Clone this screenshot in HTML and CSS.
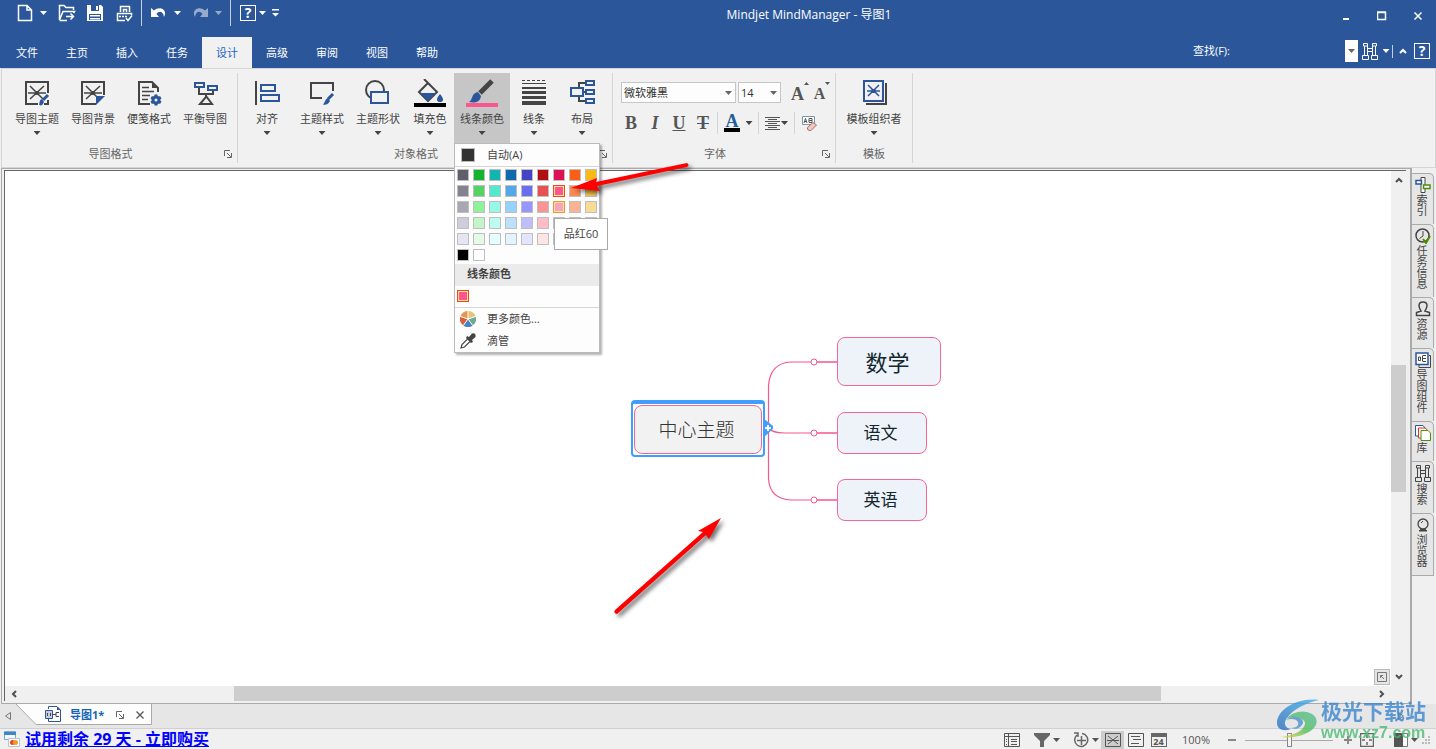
FILE: index.html
```html
<!DOCTYPE html>
<html lang="zh-CN">
<head>
<meta charset="utf-8">
<title>Mindjet MindManager - 导图1</title>
<link rel="stylesheet" href="styles.css">
</head>
<body>
<header class="header">
  <div class="titlebar">
    <div class="quick">
      <button class="qa" aria-label="新建"><svg width="16" height="18" viewBox="0 0 16 18"><path d="M1.500 1.500H10L14.500 6V16.500H1.500ZM10 1.500V6H14.500" class="ln"/></svg></button>
      <button class="qa-arrow" aria-label="新建选项"><i class="caret"></i></button>
      <button class="qa gap-l" aria-label="打开"><svg width="18" height="18" viewBox="0 0 18 18"><path d="M1.500 16V1.500H6L8 3.500H15.500V6M1.500 16L5 7.500H16.500L15.500 9M1.500 16.500H9M8 12.500H15M12.500 9.500L15.500 12.500L12.500 15.500" class="ln"/></svg></button>
      <button class="qa gap-s" aria-label="保存"><svg width="16" height="16" viewBox="0 0 16 16"><path d="M0 0H14L16 2V16H0ZM4 0V6H12V0ZM2 9V15H14V9Z" fill-rule="evenodd" fill="#fff"/><path d="M9 1H11V5H9ZM3 10H13V11.500H3ZM3 13H13V14.500H3Z" fill="#fff"/></svg></button>
      <button class="qa gap-l" aria-label="快速打印"><svg width="17" height="17" viewBox="0 0 17 17"><path d="M4.500 7V1.500H13.500V7M7.500 7V4.500H10.500V7M9 15.500H1.500V8.500H15.500V10M3 11.500H5M6 11.500H8M9 11.500H11M10 13L12 15.500L16 10.500" class="ln"/></svg></button>
      <span class="qa-sep"></span>
      <button class="qa" aria-label="撤消"><svg width="16" height="14" viewBox="0 0 16 14"><path d="M0 2V11H8L5.500 8C8 4.500 12 5 13 11C17 4 9 -1 3 4.500Z" fill="#fff"/></svg></button>
      <button class="qa-arrow" aria-label="撤消列表"><i class="caret"></i></button>
      <button class="qa gap-s dim" aria-label="恢复"><svg width="16" height="14" viewBox="0 0 16 14"><path d="M16 2V11H8L10.500 8C8 4.500 4 5 3 11C-1 4 7 -1 13 4.500Z" fill="#fff"/></svg></button>
      <button class="qa-arrow dim" aria-label="恢复列表"><i class="caret"></i></button>
      <span class="qa-sep"></span>
      <button class="help-btn gap-s" aria-label="帮助">?</button>
      <button class="qa-arrow" aria-label="帮助选项"><i class="caret"></i></button>
      <button class="qa-arrow" aria-label="自定义"><svg width="7" height="8" viewBox="0 0 7 8"><path d="M0 0H7V1.500H0ZM0 4H7L3.500 7.500Z" fill="#fff"/></svg></button>
    </div>
    <h1 class="title">Mindjet MindManager - 导图1</h1>
    <div class="win">
      <button aria-label="最小化"><svg width="10" height="10"><path d="M2 7H8V9H2Z" fill="#fff"/></svg></button>
      <button aria-label="最大化"><svg width="10" height="10"><path d="M.5 1.500H8.500V8.500H.5ZM0 1H9" class="ln"/></svg></button>
      <button aria-label="关闭"><svg width="10" height="10"><path d="M1.500 1.500L8.500 8.500M8.500 1.500L1.500 8.500" class="ln"/></svg></button>
    </div>
  </div>
  <div class="menubar">
    <nav class="tabs">
      <button>文件</button><button>主页</button><button>插入</button><button>任务</button><button class="active">设计</button><button>高级</button><button>审阅</button><button>视图</button><button>帮助</button>
    </nav>
    <div class="find">
      <label for="find">查找(F):</label>
      <input id="find" type="text">
      <button class="find-drop" aria-label="查找历史"><i class="caret"></i></button>
      <button class="find-go" aria-label="查找"><svg width="16" height="17" viewBox="0 0 16 17"><path d="M1.500 .5H5.500V3H1.500ZM10.500 .5H14.500V3H10.500ZM2.500 3V12M5.500 3V12M10.500 3V12M13.500 3V12M5.500 5.500H10.500V8.500H5.500M.5 12.500H6.500V16.500H.5ZM9.500 12.500H15.500V16.500H9.500Z" fill="none" stroke="#fff"/></svg></button>
      <button class="find-arrow" aria-label="查找选项"><i class="caret"></i></button>
      <span class="find-sep"></span>
      <button class="collapse" aria-label="折叠功能区"><svg width="8" height="6"><path d="M1 5L4 2L7 5" class="ln heavy"/></svg></button>
      <button class="help-btn" aria-label="帮助主题">?</button>
    </div>
  </div>
</header>

<section class="ribbon">
  <div class="group g-map">
    <div class="items">
      <button class="item"><svg width="28" height="28" viewBox="0 0 28 28"><path d="M15 25H3V3H25V14M21 25H25V21" class="dk"/><path d="M7 7L20 20M21 7L7 20M5 14H23" class="dk thin"/><path d="M12 12H16V16H12Z" fill="#444"/><path d="M25 16L20 21" stroke="#2b579a" stroke-width="3"/><path d="M19 20L21 23C19 27 18 27 16 25.500C17 24 16 21 19 20Z" fill="#2b579a"/></svg><span>导图主题</span><i class="caret"></i></button>
      <button class="item"><svg width="28" height="28" viewBox="0 0 28 28"><path d="M17 25H3V3H25V16" class="dk"/><path d="M7 7L20 20M21 7L7 20M5 14H23" class="dk thin"/><path d="M12 12H16V16H12Z" fill="#444"/><path d="M17 17H26L17 26Z" fill="#2b579a"/></svg><span>导图背景</span></button>
      <button class="item"><svg width="28" height="28" viewBox="0 0 28 28"><path d="M15 25H4V3H17L23 9V13" class="dk"/><path d="M17 3V9H23Z" fill="#444"/><path d="M7 8.500H14M7 12.500H19M7 16.500H15M7 20.500H13" class="dk thin"/><circle cx="21" cy="21" r="3" fill="none" stroke="#2b579a" stroke-width="3"/><path d="M21 15.500V18M21 24V26.500M16.200 18.200L18.400 19.500M23.600 22.500L25.800 23.800M25.800 18.200L23.600 19.500M16.200 23.800L18.400 22.500" stroke="#2b579a" stroke-width="3"/></svg><span>便笺格式</span></button>
      <button class="item"><svg width="28" height="28" viewBox="0 0 28 28"><path d="M8 8V15H22V11M15 15V18L9 25H21L15 17" class="dk"/><path d="M4 4H13V8H4ZM17 7H26V11H17Z" class="bl" fill="#f1f1f1"/></svg><span>平衡导图</span></button>
    </div>
    <div class="foot"><span>导图格式</span><button class="launch" aria-label="导图格式设置"><svg width="8" height="8"><path d="M.5 6V.5H6M3 3L7 7M7.500 3V7.500H3" fill="none" stroke="#666"/></svg></button></div>
  </div>
  <div class="group g-object">
    <div class="items">
      <button class="item first"><svg width="28" height="28" viewBox="0 0 28 28"><path d="M3 2V26" class="dk"/><path d="M8 6H22V12H8ZM8 16H26V22H8Z" class="bl"/></svg><span>对齐</span><i class="caret"></i></button>
      <button class="item"><svg width="28" height="28" viewBox="0 0 28 28"><path d="M14 19H3V4H25V12" class="dk"/><path d="M25 15L20 20" stroke="#2b579a" stroke-width="3"/><path d="M20 19L22 22C20 26 17 26 15 25.500C17 24 17 20 20 19Z" fill="#2b579a"/></svg><span>主题样式</span><i class="caret"></i></button>
      <button class="item"><svg width="28" height="28" viewBox="0 0 28 28"><circle cx="11" cy="11" r="9" class="dk"/><path d="M7 13H24V24H7Z" class="bl" fill="#f1f1f1"/></svg><span>主题形状</span><i class="caret"></i></button>
      <button class="item short"><svg width="32" height="28" viewBox="0 0 32 28"><path d="M5 13L14 4L23 13L14 22ZM10 0L16 6" class="dk"/><path d="M6 14H22L14 22Z" fill="#2b579a"/><path d="M26 15C21 21 23 23 26 23S31 21 26 15Z" fill="#2b579a"/><path d="M0 24H32V28H0Z" fill="#000"/></svg><span>填充色</span><i class="caret"></i></button>
      <div class="drop-host">
        <button class="item pressed" aria-expanded="true"><svg width="32" height="28" viewBox="0 0 32 28"><path d="M26 2L14 14" stroke="#444" stroke-width="5"/><path d="M12 13L15 17C14 24 8 24 3 23C7 21 5 14 12 13Z" fill="#2b579a"/><path d="M0 24H32V28H0Z" fill="#fc5590"/></svg><span>线条颜色</span><i class="caret"></i></button>
        <div class="palette">
          <button class="auto"><i></i><span>自动(A)</span></button>
          <div class="swatches">
            <button style="--c:#5f5f6b"></button><button style="--c:#12b32d"></button><button style="--c:#13b5b1"></button><button style="--c:#1069aa"></button><button style="--c:#4545c4"></button><button style="--c:#b01010"></button><button style="--c:#de1153"></button><button style="--c:#fa5f17"></button><button style="--c:#fbb917"></button>
            <button style="--c:#83838f"></button><button style="--c:#54d362"></button><button style="--c:#54e8cf"></button><button style="--c:#53a9e7"></button><button style="--c:#6a6ded"></button><button style="--c:#e65151"></button><button class="picked" style="--c:#fc558f"></button><button style="--c:#fa8a55"></button><button style="--c:#f9c452"></button>
            <button style="--c:#a8a8b4"></button><button style="--c:#90f298"></button><button style="--c:#98f8e8"></button><button style="--c:#95d3fa"></button><button style="--c:#9696fc"></button><button style="--c:#f89494"></button><button class="hovered" style="--c:#f9a1c1"></button><button style="--c:#f8b394"></button><button style="--c:#f8db94"></button>
            <button style="--c:#cfcddb"></button><button style="--c:#c4f5c8"></button><button style="--c:#bdfbf0"></button><button style="--c:#bbe1fb"></button><button style="--c:#bebefb"></button><button style="--c:#fcbdc6"></button><button style="--c:#fcc9dc"></button><button style="--c:#fbd3c0"></button><button style="--c:#fbebc0"></button>
            <button style="--c:#e6e5f2"></button><button style="--c:#e3fbe5"></button><button style="--c:#e3ffff"></button><button style="--c:#e3f3ff"></button><button style="--c:#e4e4ff"></button><button style="--c:#ffe4e4"></button><button style="--c:#ffe8f0"></button><button style="--c:#ffeee6"></button><button style="--c:#fff8e6"></button>
            <button style="--c:#000"></button><button style="--c:#fff"></button>
          </div>
          <div class="band">线条颜色</div>
          <div class="swatches current"><button class="picked" style="--c:#fc558f"></button></div>
          <button class="more top-line"><svg width="16" height="16" viewBox="0 0 16 16"><path d="M8 8V0A8 8 0 0 1 15.600 5.500Z" fill="#e9c178"/><path d="M8 8L15.600 5.500A8 8 0 0 1 12.700 14.500Z" fill="#70a896"/><path d="M8 8L12.700 14.500A8 8 0 0 1 3.300 14.500Z" fill="#4a82bd"/><path d="M8 8L3.300 14.500A8 8 0 0 1 .4 5.500Z" fill="#d9603f"/><path d="M8 8L.4 5.500A8 8 0 0 1 8 0Z" fill="#e39a50"/><path d="M8 8V0M8 8L15.600 5.500M8 8L12.700 14.500M8 8L3.300 14.500M8 8L.4 5.500" stroke="#fdfdfd"/></svg><span>更多颜色...</span></button>
          <button class="more"><svg width="16" height="16" viewBox="0 0 16 16"><path d="M1 15L2 11.500L8 5.500L10.500 8L4.500 14Z" fill="#fff" stroke="#444" stroke-width="1.200"/><path d="M7 3L9 4L12 .5Q16 -1 15.500 4L12 7L13 9L11 10L6 5Z" fill="#444"/></svg><span>滴管</span></button>
          <div class="tip" role="tooltip">品红60</div>
        </div>
      </div>
      <button class="item short"><svg width="24" height="28" viewBox="0 0 24 28"><path d="M0 1.500H24" stroke="#444" stroke-dasharray="3 2"/><path d="M0 4H24V5H0ZM0 8H24V10H0ZM0 12H24V15H0ZM0 17H24V20H0ZM0 22H24V26H0Z" fill="#444"/></svg><span>线条</span><i class="caret"></i></button>
      <button class="item short"><svg width="26" height="28" viewBox="0 0 26 28"><path d="M14 13H18M18 4H10V22H18" class="dk" /><path d="M2 9H14V17H2Z" class="bl" fill="#f1f1f1"/><path d="M17 2H25V6H17ZM17 11H25V15H17ZM17 20H25V24H17Z" class="bl" fill="#f1f1f1"/></svg><span>布局</span><i class="caret"></i></button>
    </div>
    <div class="foot"><span>对象格式</span><button class="launch" aria-label="对象格式设置"><svg width="8" height="8"><path d="M.5 6V.5H6M3 3L7 7M7.500 3V7.500H3" fill="none" stroke="#666"/></svg></button></div>
  </div>
  <div class="group g-font">
    <div class="font-body">
      <div class="font-row">
        <span class="combo family"><select aria-label="字体"><option>微软雅黑</option></select><i class="caret"></i></span>
        <span class="combo size"><select aria-label="字号"><option>14</option></select><i class="caret"></i></span>
        <button class="fbtn grow" aria-label="增大字号">A<svg width="5" height="3"><path d="M0 3L2.500 0L5 3Z" fill="#555"/></svg></button>
        <button class="fbtn shrink" aria-label="缩小字号">A<svg width="5" height="3"><path d="M0 0L2.500 3L5 0Z" fill="#555"/></svg></button>
      </div>
      <div class="font-row second">
        <button class="fbtn" aria-label="加粗">B</button>
        <button class="fbtn italic" aria-label="倾斜">I</button>
        <button class="fbtn under" aria-label="下划线">U</button>
        <button class="fbtn strike" aria-label="删除线">T</button>
        <span class="fsep"></span>
        <button class="fbtn color" aria-label="字体颜色">A</button>
        <button class="farrow" aria-label="字体颜色选项"><i class="caret"></i></button>
        <span class="fsep"></span>
        <button class="farrow align" aria-label="对齐方式"><svg width="15" height="15"><path d="M0 1.500H15M3 3.500H12M0 5.500H15M3 7.500H12M0 9.500H15M3 11.500H12M0 13.500H15" stroke="#555"/></svg><i class="caret"></i></button>
        <span class="fsep"></span>
        <button class="fbtn" aria-label="清除格式"><svg width="17" height="17" viewBox="0 0 17 17"><path d="M1.500 1.500H13.500V9.500H1.500Z" fill="#fff" stroke="#7b98a8"/><path d="M3 8L4.500 3.500L6 8M3.500 6.500H5.500M8 3.500V7.500H11V3.500H8M8 5.500H11" fill="none" stroke="#555"/><path d="M6.500 12.500L12 7.500L15.500 10L10 15.500Q6 16 6.500 12.500Z" fill="#f0c8c4" stroke="#a86c68"/></svg></button>
      </div>
    </div>
    <div class="foot"><span>字体</span><button class="launch" aria-label="字体设置"><svg width="8" height="8"><path d="M.5 6V.5H6M3 3L7 7M7.500 3V7.500H3" fill="none" stroke="#666"/></svg></button></div>
  </div>
  <div class="group g-template">
    <div class="items">
      <button class="item"><svg width="28" height="28" viewBox="0 0 28 28"><path d="M6 25H26V4" class="dk"/><path d="M4 2H23V22H4Z" class="bl"/><path d="M8 6L19 17M19 6L8 17M7 12H20" stroke="#2b579a" stroke-width="1.500"/><path d="M11.500 10H15.500V14H11.500Z" fill="#2b579a"/></svg><span>模板组织者</span><i class="caret"></i></button>
    </div>
    <div class="foot"><span>模板</span></div>
  </div>
</section>

<main class="work">
  <div class="frame">
    <div class="view">
      <div class="canvas">
        <svg class="links" width="340" height="200" viewBox="0 0 340 200">
          <path d="M137.500 96V50Q139 27 160 26H206M137.500 96V143Q139 163 160 164H206M137 92Q142 97 153 97H206" fill="none" stroke="#f4568e" stroke-width="1.200"/>
          <g fill="#fff" stroke="#f4568e"><path d="M180 26H206M180 97H206M180 164H206" stroke-width="1.200"/><circle cx="183" cy="26" r="3"/><circle cx="183" cy="97" r="3"/><circle cx="183" cy="164" r="3"/></g>
        </svg>
        <div class="selected"><div class="node root">中心主题</div></div>
        <button class="add" aria-label="添加主题"><svg width="11" height="22" viewBox="0 0 11 22"><path d="M0 1L10 9V12L0 21Z" fill="#409eff"/><path d="M2 11H8M5 8V14" stroke="#fff" stroke-width="2"/></svg></button>
        <div class="node math">数学</div>
        <div class="node chinese">语文</div>
        <div class="node english">英语</div>
        <button class="corner" aria-label="导图概览"><svg width="14" height="14"><path d="M2.500 2.500H11.500V11.500H2.500ZM5.500 8V5.500H8M6 6L9 9" fill="none" stroke="#777"/></svg></button>
      </div>
      <div class="vbar"><button aria-label="向上"><svg width="8" height="8"><path d="M1 6L4 3L7 6" class="chev"/></svg></button><i class="rest"></i><i class="thumb"></i><i class="rest"></i><button aria-label="向下"><svg width="8" height="8"><path d="M1 2L4 5L7 2" class="chev"/></svg></button></div>
    </div>
    <div class="hbar"><button aria-label="向左"><svg width="8" height="8"><path d="M6 1L3 4L6 7" class="chev"/></svg></button><i class="rest"></i><i class="thumb"></i><i class="rest"></i><button aria-label="向右"><svg width="8" height="8"><path d="M2 1L5 4L2 7" class="chev"/></svg></button></div>
  </div>
  <aside class="side">
    <button><svg width="16" height="16" viewBox="0 0 16 16"><path d="M6 .5H10V15.500H6Z" fill="#fff" stroke="#444"/><path d="M1 3.500H6.500V7H1Z" fill="#fff" stroke="#2b579a" stroke-width="1.500"/><path d="M8.500 8H15V11.500H8.500Z" fill="#fff" stroke="#4e8f00" stroke-width="1.500"/></svg><span>索引</span></button>
    <button><svg width="16" height="16" viewBox="0 0 16 16"><circle cx="7.500" cy="7.500" r="6.500" fill="none" stroke="#444" stroke-width="1.500"/><path d="M8 3V8L4.500 10.500" fill="none" stroke="#444"/><path d="M8 11L11 15L15 8" fill="none" stroke="#4e8f00" stroke-width="2"/></svg><span>任务信息</span></button>
    <button><svg width="16" height="16" viewBox="0 0 16 16"><path d="M6 10Q4 7 4 4.500Q4 1 8 1T12 4.500Q12 7 10 10L14.500 11.500V14.500H1.500V11.500Z" fill="none" stroke="#444" stroke-width="1.500"/></svg><span>资源</span></button>
    <button><svg width="16" height="16" viewBox="0 0 16 16"><path d="M14 3.500H15.500V15.500H4V13" fill="none" stroke="#444"/><path d="M1 1H13V12.500H1Z" fill="#fff" stroke="#2b579a" stroke-width="1.500"/><path d="M3.500 5H5.500V8.500H3.500ZM8 3.500H11M8 6.500H11M8 9.500H11M7.500 3.500V9.500" fill="none" stroke="#444"/></svg><span>导图组件</span></button>
    <button><svg width="16" height="16" viewBox="0 0 16 16"><path d="M.5 11V.5H8L10 3V11Z" fill="#fff" stroke="#2b579a"/><path d="M3.500 13V3H10L12.500 5V13Z" fill="#fff" stroke="#e03020"/><path d="M6 15.500V5.500H13L15.500 8V15.500Z" fill="#fff" stroke="#4e8f00"/></svg><span>库</span></button>
    <button><svg width="16" height="17" viewBox="0 0 16 17"><path d="M1.500 .5H5.500V3H1.500ZM10.500 .5H14.500V3H10.500ZM2.500 3V12M5.500 3V12M10.500 3V12M13.500 3V12M5.500 5.500H10.500V8.500H5.500M.5 12.500H6.500V16.500H.5ZM9.500 12.500H15.500V16.500H9.500Z" fill="none" stroke="#444"/></svg><span>搜索</span></button>
    <button><svg width="16" height="16" viewBox="0 0 16 16"><circle cx="8" cy="7" r="5" fill="none" stroke="#444" stroke-width="1.300"/><path d="M6 6L8 4M4 14H12L10.500 12.500H5.500Z" fill="#444" stroke="#444"/></svg><span>浏览器</span></button>
  </aside>
</main>

<div class="docs">
  <button class="nav" aria-label="上一个"><svg width="6" height="8"><path d="M5.500 .5V7.500L.5 4Z" fill="none" stroke="#777"/></svg></button>
  <div class="doc">
    <svg class="doc-shape" width="136" height="21" viewBox="0 0 136 21"><path d="M0 0L20 20.500H135.500V0" fill="#fdfdfd" stroke="#aaa"/></svg>
    <svg class="doc-icon" width="17" height="17" viewBox="0 0 17 17"><path d="M3.500 3V.5H12L15.500 4V15.500H3.500V13" fill="#fff" stroke="#2b579a"/><path d="M12 .5V4H15.500Z" fill="#2b579a"/><path d="M.5 4.500H7.500V12.500H.5Z" fill="#ccd" stroke="#2b579a"/><path d="M2.500 7V10M5.500 7V10M8 8.500H11M14 6.500H11V10.500H14" fill="none" stroke="#444"/></svg>
    <span>导图1*</span>
    <button aria-label="浮动"><svg width="8" height="8"><path d="M.5 6V.5H6M3 3L7 7M7.500 3V7.500H3" fill="none" stroke="#666"/></svg></button>
    <button aria-label="关闭导图"><svg width="8" height="8"><path d="M.5 .5L7.500 7.500M7.500 .5L.5 7.500" stroke="#555" stroke-width="1.300"/></svg></button>
  </div>
  <button class="nav next" aria-label="下一个"><svg width="6" height="8"><path d="M.5 .5V7.500L5.500 4Z" fill="none" stroke="#777"/></svg></button>
</div>

<footer class="status">
  <svg width="16" height="16" viewBox="0 0 16 16"><path d="M.5 .5H11.500V8.500H.5Z" fill="#f4f8fb" stroke="#80a8c8"/><path d="M0 1H12V4H0Z" fill="#3d87c2"/><path d="M4.500 7.500H15.500V15.500H4.500Z" fill="#fff" stroke="#b9c4cc"/><circle cx="8.500" cy="11.500" r="2.500" fill="#e04a20"/><circle cx="11.500" cy="11.500" r="2.500" fill="#f29a30"/></svg>
  <a href="#buy">试用剩余 29 天 - 立即购买</a>
  <div class="tools">
    <button class="t" aria-label="大纲"><svg width="16" height="14"><path d="M.5 .5H15.500V13.500H.5ZM0 3.500H15M4.500 1V13M2 6.500H3M7 6.500H13M2 8.500H3M7 8.500H13M2 11.500H3M7 11.500H13" fill="none" stroke="#555"/></svg></button>
    <button class="t duo" aria-label="筛选"><svg width="16" height="14"><path d="M0 0H16V2L10 8V14H6V8L0 2Z" fill="#666"/></svg><i class="caret"></i></button>
    <button class="t duo" aria-label="展开"><svg width="16" height="16"><path d="M4 3A6.500 6.500 0 1 0 9 1.500M4 8.500H13M8.500 4V13M1 1H5V5" fill="none" stroke="#666" stroke-width="1.500"/></svg><i class="caret"></i></button>
    <button class="t on" aria-label="导图视图"><svg width="16" height="14"><path d="M.5 .5H15.500V13.500H.5ZM3 3L13 11M13 3L3 11M2 7.500H14" fill="none" stroke="#555"/></svg></button>
    <button class="t" aria-label="大纲视图"><svg width="16" height="14"><path d="M.5 .5H15.500V13.500H.5ZM3 3.500H12M5 6.500H13M3 10.500H11" fill="none" stroke="#555"/></svg></button>
    <button class="t cal" aria-label="日程视图"><b>24</b></button>
    <span class="pct">100%</span>
    <button class="t sm minus" aria-label="缩小"><svg width="8" height="8"><path d="M0 4H8" stroke="#888" stroke-width="2"/></svg></button>
    <input class="zoom" type="range" aria-label="缩放" min="0" max="100" value="50">
    <button class="t sm" aria-label="放大"><svg width="8" height="8"><path d="M0 4H8M4 0V8" stroke="#888" stroke-width="2"/></svg></button>
    <button class="t fit" aria-label="适合窗口"><svg width="14" height="14"><path d="M.5 .5H13.500V13.500H.5ZM7 2V5M7 9V12M2 7H5M9 7H12" fill="none" stroke="#666" stroke-width="1.500"/></svg></button>
    <button class="t duo" aria-label="任务窗格"><svg width="14" height="14"><path d="M.5 .5H13.500V13.500H.5Z" fill="#fff" stroke="#777"/><path d="M0 0H9V14H0Z" fill="#555"/></svg><i class="caret"></i></button>
    <svg class="grip" width="9" height="9"><path d="M6 0H8V2H6ZM3 3H5V5H3ZM6 3H8V5H6ZM0 6H2V8H0ZM3 6H5V8H3ZM6 6H8V8H6Z" fill="#bbb"/></svg>
  </div>
</footer>

<svg class="arrows" width="720" height="640" viewBox="0 0 720 640" aria-hidden="true">
  <g fill="red" stroke="none"><path d="M571 188L597 178L596 182L687 163Q690 165 687 167L597 186L600 191Z"/><path d="M721 518L709 539L706 535L617 614Q613 613 615 610L703 532L698 531Z"/></g>
</svg>

<div class="mark">
  <svg width="42" height="40" viewBox="0 0 42 40"><defs><linearGradient id="a" x1="0" y1="1" x2="1" y2="0"><stop offset="0" stop-color="#2f6fc4"/><stop offset="1" stop-color="#45b5e8"/></linearGradient><linearGradient id="b" x1="0" y1="1" x2="1" y2="0"><stop offset="0" stop-color="#f0d545"/><stop offset=".5" stop-color="#52bd5e"/><stop offset="1" stop-color="#58be9b"/></linearGradient></defs><path d="M42 1C20-2 0 11 0 24C0 30 6 33 14 30C8 29 6 24 10 19C16 10 29 4 42 1Z" fill="url(#a)"/><path d="M9 20C14 14 23 11 30 13C38 15 41 20 39 26C34 35 19 40 3 38C15 37 27 32 28 25C29 20 18 16 9 20Z" fill="url(#b)"/><path d="M9 21C18 14 27 20 26 24C23 31 17 30 14 29C20 29 22 26 21 23C18 19 13 20 9 21Z" fill="#4d91d2"/></svg>
  <div><b>极光下载站</b><em>www.xz7.com</em></div>
</div>
</body>
</html>
```

FILE: styles.css
```css
* { box-sizing: border-box; }
html, body { height: 100%; }
body {
  margin: 0;
  display: flex;
  flex-direction: column;
  position: relative;
  overflow: hidden;
  background: #f0f0f0;
  color: #444;
  font: 11px/14px "Open Sans", "Noto Sans CJK SC", sans-serif;
}
button { margin: 0; padding: 0; border: 0; background: none; color: inherit; font: inherit; display: flex; align-items: center; justify-content: center; }
svg { display: block; flex: none; }
.ln { fill: none; stroke: #fff; stroke-width: 1.5; }
.ln.heavy { stroke-width: 2; }
.dk { fill: none; stroke: #444; stroke-width: 2; }
.dk.thin { stroke-width: 1.5; }
.bl { stroke: #2b579a; stroke-width: 2; }
.bl:not([fill]) { fill: none; }
.chev { fill: none; stroke: #505050; stroke-width: 2; }
.caret { flex: none; width: 7px; height: 4px; background: currentColor; clip-path: polygon(0 0, 100% 0, 50% 100%); }

/* header */
.header { background: #2b579a; color: #fff; }
.titlebar { display: flex; height: 37px; }
.quick { display: flex; align-items: center; height: 26px; padding-left: 13px; }
.qa { width: 24px; height: 24px; }
.qa-arrow { width: 13px; height: 24px; }
.gap-l { margin-left: 5px; }
.gap-s { margin-left: 4px; }
.dim { opacity: .5; }
.qa-sep { width: 1px; height: 26px; margin: 0 5px; background: #c5cfe0; }
.help-btn { width: 16px; height: 16px; border: 1px solid #fff; font-size: 14px; font-weight: 700; }
.title { flex: 1; margin: 0; padding: 7px 0 0 8px; font-size: 12px; line-height: 16px; font-weight: 400; text-align: center; }
.win { display: flex; height: 32px; }
.win button { width: 36px; }
.menubar { display: flex; justify-content: space-between; height: 31px; }
.tabs { display: flex; padding-left: 2px; }
.tabs button { width: 50px; }
.tabs .active { background: #f1f1f1; color: #1a64c8; }
.find { display: flex; align-items: center; padding-right: 6px; height: 28px; }
.find input { width: 104px; height: 22px; margin-left: 11px; padding: 0 4px; border: 0; background: #2b579a; color: #fff; font: inherit; }
.find-drop { width: 13px; height: 22px; background: #fff; color: #666; }
.find-go { width: 24px; }
.find-arrow { width: 8px; height: 22px; }
.find-sep { width: 1px; height: 13px; margin: 0 6px 0 2px; background: #c5cfe0; }
.collapse { width: 8px; margin-right: 7px; }

/* ribbon */
.ribbon { display: flex; height: 100px; margin-left: 1px; padding: 4px 0; border: 1px solid #d5d5d5; background: #f1f1f1; }
.group { display: flex; flex-direction: column; border-right: 1px solid #d5d5d5; }
.g-map { width: 236px; }
.g-object { width: 375px; }
.g-font { width: 223px; }
.g-template { width: 77px; }
.items { display: flex; height: 70px; }
.g-map .items { padding-left: 7px; }
.g-object .items { padding-left: 2px; }
.g-template .items { justify-content: center; }
.item { flex-direction: column; justify-content: flex-start; width: 56px; height: 70px; padding-top: 6px; white-space: nowrap; }
.item span { margin: 5px 0; }
.item.short { width: 48px; }
.item.first { width: 54px; }
.item.pressed { background: #c6c6c6; }
.foot { display: flex; align-items: center; height: 16px; margin-top: 3px; color: #666; }
.foot span { flex: 1; text-align: center; }
.launch { width: 18px; height: 16px; }

.drop-host { position: relative; }
.palette { position: absolute; z-index: 5; top: 70px; left: 0; width: 146px; border: 1px solid #bbb; background: #fdfdfd; box-shadow: 2px 2px 2px rgba(0,0,0,.3); }
.auto { width: 100%; height: 23px; justify-content: flex-start; gap: 12px; padding-left: 6px; border-bottom: 1px solid #d5d5d5; }
.auto i { width: 14px; height: 14px; border: 1px solid #bbb; background: #333; }
.swatches { display: grid; grid-template-columns: repeat(9, 12px); gap: 4px; padding: 2px 2px 3px; }
.swatches button { width: 12px; height: 12px; border: 1px solid #bfbfbf; background: var(--c); }
.swatches .picked { border-color: #e84a1c; box-shadow: inset 0 0 0 1px #ffe294; }
.swatches .hovered { border-color: #ef9436; box-shadow: inset 0 0 0 1px #ffe294; }
.band { height: 22px; padding-left: 12px; background: #ebebeb; font-weight: 700; line-height: 20px; }
.swatches.current { padding: 4px 2px 5px; }
.more { width: 100%; height: 22px; justify-content: flex-start; gap: 11px; padding-left: 5px; }
.more.top-line { height: 23px; border-top: 1px solid #d5d5d5; }
.tip { position: absolute; left: 99px; top: 74px; width: 54px; height: 32px; border: 1px solid #aaa; background: #fff; line-height: 30px; text-align: center; }

.font-body { height: 70px; padding: 9px 0 0 8px; }
.font-row { display: flex; align-items: center; height: 21px; }
.second { height: 22px; margin-top: 9px; gap: 4px; }
.combo { position: relative; height: 21px; }
.combo select { width: 100%; height: 21px; padding: 0 2px; border: 1px solid #c6c6c6; border-radius: 0; background: #fdfdfd; color: #333; font: inherit; appearance: none; }
.combo .caret { position: absolute; right: 4px; top: 9px; background: #666; }
.family { width: 115px; }
.size { width: 43px; margin: 0 8px 0 2px; }
.fbtn { width: 20px; height: 22px; color: #555; font: 700 18px/20px "Liberation Serif", serif; }
.font-row .grow, .font-row .shrink { width: 22px; align-items: flex-start; font-size: 18px; line-height: 24px; }
.font-row .shrink { font-size: 16px; }
.italic { font-style: italic; }
.under { text-decoration: underline; }
.strike { text-decoration: line-through #2b579a; }
.fbtn.color { width: 16px; height: 18px; color: #1f5f9c; border-bottom: 4px solid #000; line-height: 14px; }
.color { margin-left: 2px; }
.fsep { width: 1px; height: 22px; background: #d5d5d5; }
.farrow { width: 10px; height: 22px; }
.align { width: 27px; gap: 1px; }

/* workspace */
.work { flex: 1; display: flex; min-height: 0; }
.frame { flex: 1; display: flex; flex-direction: column; min-width: 0; margin-left: 1px; padding: 1px 4px 2px 2px; border: solid #aaa; border-width: 1px 2px 1px 1px; }
.view { flex: 1; display: flex; min-height: 0; border: solid #666; border-width: 1px 0 0 1px; }
.canvas { flex: 1; position: relative; background: #fff; overflow: hidden; }
.vbar { display: flex; flex-direction: column; width: 15px; background: #f0f0f0; }
.vbar button { height: 18px; }
.vbar .thumb { flex: 127; background: #cdcdcd; }
.vbar .rest { flex: 177; }
.hbar { display: flex; height: 15px; padding-right: 16px; border-left: 1px solid #666; background: #f0f0f0; }
.hbar button { width: 17px; }
.hbar .thumb { flex: 928; background: #cdcdcd; }
.hbar .rest { flex: 212; }
.links { position: absolute; left: 626px; top: 165px; }
.node { display: flex; align-items: center; justify-content: center; padding-right: 3px; border: 1px solid #f4669a; border-radius: 8px; background: #eef3fa; color: #12282e; font-size: 17px; }
.math { position: absolute; left: 832px; top: 166px; width: 104px; height: 49px; font-size: 22px; }
.chinese { position: absolute; left: 832px; top: 241px; width: 90px; height: 42px; }
.english { position: absolute; left: 832px; top: 308px; width: 90px; height: 42px; }
.selected { position: absolute; left: 626px; top: 229px; width: 134px; height: 57px; padding: 1px; border: solid #409eff; border-width: 4px 2px 2px; border-radius: 4px; background: #fff; }
.root { height: 100%; background: #f2f2f2; color: #333; font-size: 19px; font-weight: 300; }
.add { position: absolute; left: 758px; top: 246px; }
.corner { position: absolute; right: 1px; bottom: 1px; border: 1px solid #bbb; background: #e5e5e5; }

.side { width: 24px; padding-top: 5px; }
.side button { flex-direction: column; width: 22px; padding: 3px 0 8px; border: 1px solid #aaa; border-left: 0; border-bottom: 0; border-top-right-radius: 5px; background: #e6e6e6; }
.side button:last-child { border-bottom: 1px solid #aaa; }
.side span { margin: 1px 3px 0 0; writing-mode: vertical-rl; line-height: 16px; }

/* document tabs */
.docs { display: flex; align-items: flex-start; height: 25px; padding-left: 5px; border-bottom: 1px solid #d0d0d0; background: #e6e6e6; }
.nav { width: 6px; height: 24px; }
.next { margin: 0 32px 0 auto; }
.doc { position: relative; display: flex; align-items: center; height: 21px; margin-left: 5px; padding: 0 11px 0 29px; gap: 12px; color: #1565b8; font-weight: 700; }
.doc > * { position: relative; }
.doc-icon { margin-right: -4px; }
.doc > .doc-shape { position: absolute; left: 0; top: 0; }

/* status bar */
.status { display: flex; align-items: center; height: 20px; padding: 0 5px 0 4px; white-space: nowrap; }
.status a { margin-left: 5px; color: #00f; font-size: 16px; line-height: 20px; font-weight: 700; }
.tools { display: flex; align-items: center; height: 20px; margin-left: auto; padding-top: 2px; color: #555; }
.t { width: 23px; height: 18px; }
.duo { width: 39px; justify-content: flex-end; gap: 3px; padding-right: 2px; }
.on { background: #cdcdcd; }
.cal b { width: 16px; height: 14px; border: 1px solid #666; border-top-width: 4px; font-size: 9px; line-height: 9px; }
.pct { width: 52px; text-align: center; }
.sm { width: 14px; }
.minus { margin-left: 3px; }
.zoom { width: 88px; height: 16px; margin: 0 8px 0 6px; appearance: none; background: linear-gradient(#aaa, #aaa) center / 100% 1px no-repeat; }
.zoom::-webkit-slider-thumb { appearance: none; width: 5px; height: 14px; border: 1px solid #888; background: #f4f4f4; }
.fit { width: 24px; margin-right: 2px; }
.grip { margin-left: 2px; }

.arrows { position: absolute; left: 0; top: 0; z-index: 9; overflow: visible; pointer-events: none; filter: drop-shadow(3px 3px 2px rgba(0,0,0,.55)); }

.mark { position: absolute; right: 10px; bottom: 6px; z-index: 8; display: flex; gap: 2px; opacity: .8; pointer-events: none; }
.mark div { display: flex; flex-direction: column; }
.mark b { color: #3d87cf; font-size: 21px; line-height: 24px; font-weight: 700; }
.mark em { color: #4dba74; font: 700 16px/20px "Liberation Sans", sans-serif; }
```
